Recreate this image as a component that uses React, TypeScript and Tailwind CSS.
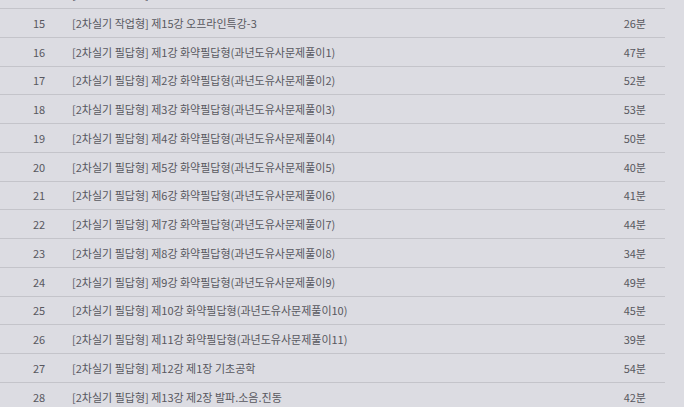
const ROWS = [
  { no: 14, title: "[2차실기 작업형] 제14강 오프라인특강-2", min: "40분" },
  { no: 15, title: "[2차실기 작업형] 제15강 오프라인특강-3", min: "26분" },
  { no: 16, title: "[2차실기 필답형] 제1강 화약필답형(과년도유사문제풀이1)", min: "47분" },
  { no: 17, title: "[2차실기 필답형] 제2강 화약필답형(과년도유사문제풀이2)", min: "52분" },
  { no: 18, title: "[2차실기 필답형] 제3강 화약필답형(과년도유사문제풀이3)", min: "53분" },
  { no: 19, title: "[2차실기 필답형] 제4강 화약필답형(과년도유사문제풀이4)", min: "50분" },
  { no: 20, title: "[2차실기 필답형] 제5강 화약필답형(과년도유사문제풀이5)", min: "40분" },
  { no: 21, title: "[2차실기 필답형] 제6강 화약필답형(과년도유사문제풀이6)", min: "41분" },
  { no: 22, title: "[2차실기 필답형] 제7강 화약필답형(과년도유사문제풀이7)", min: "44분" },
  { no: 23, title: "[2차실기 필답형] 제8강 화약필답형(과년도유사문제풀이8)", min: "34분" },
  { no: 24, title: "[2차실기 필답형] 제9강 화약필답형(과년도유사문제풀이9)", min: "49분" },
  { no: 25, title: "[2차실기 필답형] 제10강 화약필답형(과년도유사문제풀이10)", min: "45분" },
  { no: 26, title: "[2차실기 필답형] 제11강 화약필답형(과년도유사문제풀이11)", min: "39분" },
  { no: 27, title: "[2차실기 필답형] 제12강 제1장 기초공학", min: "54분" },
  { no: 28, title: "[2차실기 필답형] 제13강 제2장 발파.소음.진동", min: "42분" },
];

export default function App() {
  return (
    <div
      className="w-[684px] h-[407px] overflow-hidden bg-[#dcdce2] text-[11px] text-[#58585f]"
      style={{ fontFamily: '"Noto Sans CJK KR", "Noto Sans", sans-serif' }}
    >
      <div className="-mt-[20px] w-[665px]">
        {ROWS.map((r, i) => (
          <div
            key={r.no}
            className={
              "flex items-center border-b border-[#c4c4ca] " +
              (i % 4 === 3 ? "h-[28px]" : "h-[29px]")
            }
          >
            <div className="w-[72px] pl-[33px] shrink-0">{r.no}</div>
            <div className="flex-1 truncate">{r.title}</div>
            <div className="w-[60px] pr-[19px] text-right shrink-0">{r.min}</div>
          </div>
        ))}
      </div>
    </div>
  );
}
